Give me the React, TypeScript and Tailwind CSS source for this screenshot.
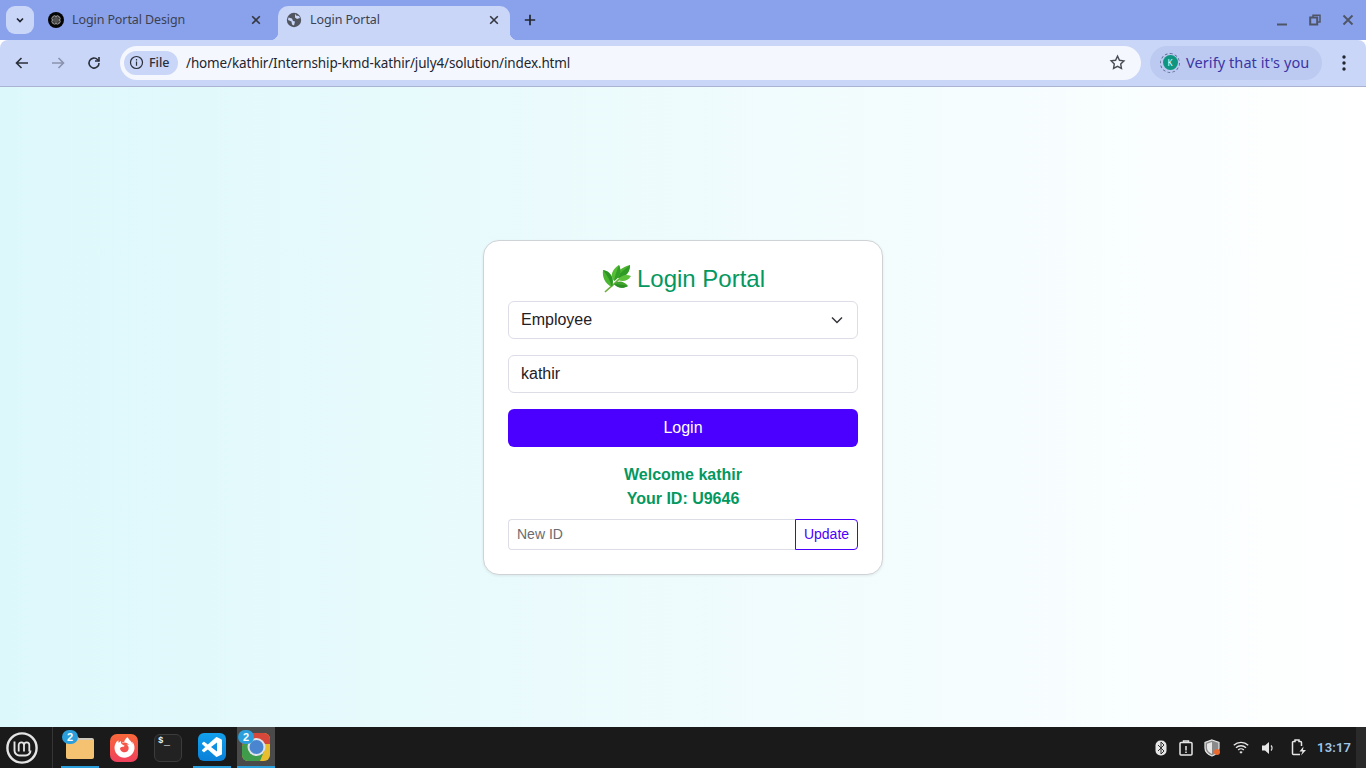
import React from "react";
import { FaFirefoxBrowser } from "react-icons/fa";

const ui = "font-['Noto_Sans',sans-serif]";

function Tab({ active, title, icon, w }: { active?: boolean; title: string; icon: React.ReactNode; w: string }) {
  return (
    <div className={`relative flex h-[34px] items-center rounded-t-[10px] pb-[6px] pr-[9px] ${w} ${active ? "bg-[#c9d6f8] pl-[8px]" : "pl-[9px]"}`}>
      <span className="flex w-[16px] justify-center">{icon}</span>
      <span className={`ml-[8px] flex-1 whitespace-nowrap text-[12.5px] tracking-[-0.1px] text-[#3c4150] ${ui}`}>{title}</span>
      <svg width="10" height="10" viewBox="0 0 10 10" className="mr-[2px]" fill="none" stroke="#34373f" strokeWidth="1.6">
        <path d="M1.2 1.2 8.8 8.8M8.8 1.2 1.2 8.8" />
      </svg>
      {active && (
        <>
          <span className="absolute bottom-0 left-[-8px] h-[8px] w-[8px] bg-[radial-gradient(circle_at_0_0,transparent_8px,#c9d6f8_8.5px)]" />
          <span className="absolute bottom-0 right-[-8px] h-[8px] w-[8px] bg-[radial-gradient(circle_at_100%_0,transparent_8px,#c9d6f8_8.5px)]" />
        </>
      )}
    </div>
  );
}

function TabStrip() {
  return (
    <div className="flex h-[40px] shrink-0 items-end bg-[#8aa1ec] pl-[6px]">
      <div className="mb-[6px] mr-[5px] flex h-[28px] w-[28px] items-center justify-center rounded-[9px] bg-[#c9d6f8]">
        <svg width="10" height="10" viewBox="0 0 10 10" fill="none" stroke="#1f2330" strokeWidth="1.7">
          <path d="M2 3.5 5 6.5 8 3.5" />
        </svg>
      </div>
      <Tab
        w="w-[233px]"
        title="Login Portal Design"
        icon={
          <svg width="16" height="16" viewBox="0 0 16 16">
            <circle cx="8" cy="8" r="8" fill="#050505" />
            <circle cx="8" cy="8" r="5" fill="#8f8f8f" />
            <g fill="none" stroke="#111111" strokeWidth="0.7">
              <ellipse cx="8" cy="8" rx="2.2" ry="4.6" />
              <ellipse cx="8" cy="8" rx="4.6" ry="2.2" />
              <circle cx="8" cy="8" r="1.2" />
            </g>
          </svg>
        }
      />
      <div className="w-[6px]" />
      <Tab
        active
        w="w-[232px]"
        title="Login Portal"
        icon={
          <svg width="16" height="16" viewBox="0 0 16 16">
            <circle cx="8" cy="8" r="7.2" fill="#50555f" />
            <path d="M2.5 5.5 6 6.5l1 2.500 2 .5-1 4-2-1-.5-3-3.500-1.500zM9 1.500l1 2 3 .5 1 2-3 1-2-1.500z" fill="#c9d6f8" />
          </svg>
        }
      />
      <div className="mb-[6px] ml-[10px] flex h-[28px] w-[20px] items-center justify-center">
        <svg width="12" height="12" viewBox="0 0 12 12" fill="none" stroke="#23262f" strokeWidth="1.7">
          <path d="M6 .8v10.400M.8 6h10.400" />
        </svg>
      </div>
      <div className="mb-[6px] ml-auto flex h-[28px] items-center gap-[21px] pr-[12px]">
        <svg width="12" height="12" viewBox="0 0 12 12" fill="none" stroke="#4e5566" strokeWidth="2">
          <path d="M1 10.500h10" />
        </svg>
        <svg width="12" height="12" viewBox="0 0 12 12" fill="none" stroke="#4e5566" strokeWidth="1.500">
          <path d="M4 3V1.200h7V8H8.500" />
          <rect x="1.200" y="3.500" width="7" height="7" strokeWidth="2" />
        </svg>
        <svg width="12" height="12" viewBox="0 0 12 12" fill="none" stroke="#4e5566" strokeWidth="1.900">
          <path d="M1.500 1.500 10.500 10.500M10.500 1.500 1.500 10.500" />
        </svg>
      </div>
    </div>
  );
}

function Toolbar() {
  return (
    <div className="flex h-[47px] shrink-0 items-center rounded-t-[8px] border-b border-[#aab4d2] bg-[#c9d6f8] pb-[1px]">
      <div className="flex w-[120px] items-center pl-[14px]">
        <svg width="16" height="16" viewBox="0 0 16 16" fill="none" stroke="#2b2f3a" strokeWidth="1.600">
          <path d="M14 8H2.500M7.500 3 2.500 8l5 5" />
        </svg>
        <svg width="16" height="16" viewBox="0 0 16 16" fill="none" stroke="#8a92ad" strokeWidth="1.600" className="ml-[20px]">
          <path d="M2 8h11.500M8.500 3l5 5-5 5" />
        </svg>
        <svg width="16" height="16" viewBox="0 0 16 16" fill="none" stroke="#2b2f3a" strokeWidth="1.600" className="ml-[20px]">
          <path d="M13 8a5 5 0 1 1-1.500-3.500L13 6" />
          <path d="M13 2v4H9" />
        </svg>
      </div>
      <div className="flex h-[34px] w-[1021px] items-center rounded-full bg-[#f5f7fe] pl-[4px] pr-[15px]">
        <div className="flex h-[24px] w-[54px] items-center rounded-full bg-[#c9d6f8] pl-[5px]">
          <svg width="15" height="15" viewBox="0 0 15 15" fill="none" stroke="#2b2f3a" strokeWidth="1.200">
            <circle cx="7.500" cy="7.500" r="6" />
            <path d="M7.500 6.500v4.200M7.500 4v1.500" />
          </svg>
          <span className={`ml-[5px] pt-[1px] text-[12.5px] font-medium text-[#2b2f3a] ${ui}`}>File</span>
        </div>
        <span className={`ml-[8px] flex-1 whitespace-nowrap pt-[1px] text-[13.5px] tracking-[-0.14px] text-[#23262f] ${ui}`}>
          /home/kathir/Internship-kmd-kathir/july4/solution/index.html
        </span>
        <svg width="17" height="17" viewBox="0 0 24 24" fill="none" stroke="#4a4d56" strokeWidth="2">
          <path d="m12 3 2.800 5.800 6.300.9-4.600 4.400 1.100 6.300-5.600-3-5.600 3 1.100-6.300L3 9.700l6.300-.9z" />
        </svg>
      </div>
      <div className="ml-[9px] flex h-[34px] w-[172px] items-center rounded-full bg-[#bccaf1] pl-[10px]">
        <div className="relative flex h-[20px] w-[20px] items-center justify-center rounded-full border border-dashed border-[#5f6b91]">
          <div className="flex h-[15px] w-[15px] items-center justify-center rounded-full bg-[#0f9580] text-[8px] text-white">K</div>
        </div>
        <span className={`ml-[6px] whitespace-nowrap text-[14.5px] tracking-[0.08px] text-[#3b35a5] ${ui}`}>Verify that it's you</span>
      </div>
      <svg width="4" height="16" viewBox="0 0 4 16" fill="#23262f" className="ml-[20px]">
        <circle cx="2" cy="2" r="1.700" />
        <circle cx="2" cy="8" r="1.700" />
        <circle cx="2" cy="14" r="1.700" />
      </svg>
    </div>
  );
}

function Leaf() {
  return (
    <svg width="30" height="28" viewBox="0 0 30 28" className="mr-[5px]">
      <path d="M3 27C8 22 16 17 24 6" stroke="#6fae3e" strokeWidth="1.500" fill="none" />
      <path d="M14 13C15 5 21 2 28 0 28 8 23 13 14 13z" fill="#4db52f" />
      <path d="M14 13C18 8 22 5 28 0 28 8 23 13 14 13z" fill="#2f9a26" />
      <path d="M12 16C7 10 11 4 17 0 20 6 18 12 12 16z" fill="#55bd34" />
      <path d="M12 16C13 10 15 5 17 0 20 6 18 12 12 16z" fill="#33a028" />
      <path d="M10 22C3 19 0 12 1 5 8 6 13 13 10 22z" fill="#49b530" />
      <path d="M10 22C8 15 5 10 1 5 8 6 13 13 10 22z" fill="#2c9525" />
      <path d="M16 15C19 10 24 9 29 11 26 16 21 17 16 15z" fill="#5cc13a" />
      <path d="M12 19C16 15 22 16 26 21 21 24 15 23 12 19z" fill="#3fa52b" />
      <path d="M12 19C17 19 21 20 26 21 21 24 15 23 12 19z" fill="#2c8f26" />
    </svg>
  );
}

function Card() {
  return (
    <div className="box-border flex w-[400px] flex-col rounded-[16px] border border-[#cfd3d6] bg-white px-[24px] pb-[24px] pt-[24px] font-['Liberation_Sans',sans-serif] shadow-[0_1px_3px_rgba(0,0,0,0.08)]">
      <div className="flex h-[28px] items-center justify-center pl-[1px] text-[24px] leading-[28px] text-[#03985f]">
        <Leaf />
        <span>Login Portal</span>
      </div>
      <div className="mt-[8px] flex h-[38px] items-center justify-between rounded-[6px] border border-[#dcdde6] pl-[12px] pr-[14px] text-[16px] text-[#1f2024]">
        <span>Employee</span>
        <svg width="12" height="8" viewBox="0 0 12 8" fill="none" stroke="#33353c" strokeWidth="1.500">
          <path d="M1 1.500 6 6.500 11 1.500" />
        </svg>
      </div>
      <div className="mt-[16px] flex h-[38px] items-center rounded-[6px] border border-[#dcdde6] pl-[12px] text-[16px] text-[#1f2024]">kathir</div>
      <div className="mt-[16px] flex h-[38px] items-center justify-center rounded-[6px] bg-[#4b00ff] text-[16px] text-white">Login</div>
      <div className="mt-[16px] text-center text-[16px] font-bold leading-[24px] text-[#03985f]">
        <div>Welcome kathir</div>
        <div>Your ID: U9646</div>
      </div>
      <div className="mt-[8px] flex h-[31px]">
        <div className="flex flex-1 items-center rounded-l-[4px] border border-r-0 border-[#dcdde6] pl-[8px] text-[14px] text-[#6b6b70]">New ID</div>
        <div className="flex w-[63px] items-center justify-center rounded-r-[4px] border border-[#4b00ff] text-[14px] text-[#4b00ff]">Update</div>
      </div>
    </div>
  );
}

function Badge() {
  return (
    <span className="absolute left-[1px] top-[3px] z-10 flex h-[14px] w-[16px] items-center justify-center rounded-full bg-[#2a9fdc] font-['Liberation_Sans',sans-serif] text-[11px] font-bold text-white">
      2
    </span>
  );
}

function Taskbar() {
  return (
    <div className="flex h-[41px] shrink-0 items-center bg-[#1a1a1a]">
      <div className="flex w-[53px] items-center justify-between">
        <svg width="32" height="32" viewBox="0 0 32 32" className="ml-[6px]" fill="none" stroke="#e4e4e4">
          <circle cx="16" cy="16" r="14.600" strokeWidth="2.400" />
          <path d="M8.500 9.500V18.500a5 5 0 0 0 5 5h6a5 5 0 0 0 5-5" strokeWidth="1.900" />
          <path d="M12.700 19.500V13a2.200 2.200 0 0 1 5.300 0v6.500M18 13a2.200 2.200 0 0 1 5.300 0v6.500" strokeWidth="1.800" />
        </svg>
        <div className="h-[41px] w-px bg-[#353535]" />
      </div>
      <div className="relative ml-[8px] flex h-[41px] w-[38px] items-center justify-center border-b-[2px] border-[#2a9fdc]">
        <Badge />
        <svg width="28" height="23" viewBox="0 0 28 23" className="mt-[2px]">
          <path d="M0 2a2 2 0 0 1 2-2h9l2 2h13a2 2 0 0 1 2 2v2H0z" fill="#cfc9bb" />
          <path d="M0 4h28v17a2 2 0 0 1-2 2H2a2 2 0 0 1-2-2z" fill="#f5c272" />
        </svg>
      </div>
      <div className="ml-[6px] flex h-[41px] w-[38px] items-center justify-center">
        <div className="flex h-[28px] w-[28px] items-center justify-center rounded-[7px] bg-[linear-gradient(to_bottom,#f8683a,#f0405c)]">
          <FaFirefoxBrowser size={21} color="#ffffff" />
        </div>
      </div>
      <div className="ml-[6px] flex h-[41px] w-[38px] items-center justify-center">
        <div className="relative h-[28px] w-[28px] rounded-[6px] border border-[#3c3c3c] bg-[#222222]">
          <span className="absolute left-[3px] top-[1px] font-['Liberation_Mono',monospace] text-[9px] font-bold leading-[11px] tracking-[0.5px] text-[#eeeeee]">$</span>
          <span className="absolute left-[9px] top-[2px] font-['Liberation_Mono',monospace] text-[10px] font-bold leading-[11px] text-[#eeeeee]">_</span>
        </div>
      </div>
      <div className="ml-[6px] flex h-[41px] w-[38px] items-center justify-center border-b-[2px] border-[#2a9fdc]">
        <div className="flex h-[28px] w-[28px] items-center justify-center rounded-[6px] bg-[linear-gradient(to_bottom,#12a0ec,#0a80d8)]">
          <svg width="20" height="20" viewBox="0 0 24 24">
            <path
              fill="#ffffff"
              d="M23.150 2.587L18.210.21a1.494 1.494 0 0 0-1.705.29l-9.460 8.630-4.120-3.128a.999.999 0 0 0-1.276.057L.327 7.261A1 1 0 0 0 .326 8.740L3.899 12 .326 15.260a1 1 0 0 0 .001 1.479L1.650 17.940a.999.999 0 0 0 1.276.057l4.120-3.128 9.460 8.630a1.492 1.492 0 0 0 1.704.29l4.942-2.377A1.500 1.500 0 0 0 24 20.060V3.939a1.500 1.500 0 0 0-.850-1.352zm-5.146 14.861L10.826 12l7.178-5.448v10.896z"
            />
          </svg>
        </div>
      </div>
      <div className="relative ml-[6px] flex h-[41px] w-[38px] items-center justify-center border-b-[2px] border-[#2a9fdc] bg-[#4a4a4a]">
        <Badge />
        <div className="h-[28px] w-[28px] overflow-hidden rounded-[6px] bg-[#e8bd2e]">
          <svg width="28" height="28" viewBox="0 0 28 28">
            <path d="M0 0h28v11H14L5 21 0 12z" fill="#d8483a" />
            <path d="M0 11l10 17h8L23 16H14L5 11z" fill="#3f9c4a" />
            <path d="M0 12v16h14z" fill="#3f9c4a" />
            <circle cx="14.500" cy="14" r="9" fill="#dfe3ea" />
            <circle cx="14.500" cy="14" r="7" fill="#4a86cf" />
          </svg>
        </div>
      </div>

      <div className="ml-auto flex h-[41px] items-center">
        <svg width="12" height="16" viewBox="0 0 12 16">
          <rect x="0.500" y="0.500" width="11" height="15" rx="5" fill="#e6e6e6" />
          <path d="M3 5l6 6-3 3V2l3 3-6 6" fill="none" stroke="#333333" strokeWidth="1" />
        </svg>
        <svg width="14" height="16" viewBox="0 0 14 16" className="ml-[12px]" fill="none" stroke="#e6e6e6" strokeWidth="1.500">
          <rect x="1" y="2.500" width="12" height="12.500" rx="1" />
          <path d="M4.500 2.500V1h5v1.500M7 6v4.500M7 11.500v1.500" />
        </svg>
        <svg width="18" height="18" viewBox="0 0 18 18" className="ml-[11px]">
          <path d="M8 1 15 3.500V9c0 4-3 6.500-7 8-4-1.500-7-4-7-8V3.500z" fill="#8a8a8a" stroke="#e6e6e6" strokeWidth="1.200" />
          <path d="M8 3v12c-3-1.500-5-3.500-5-6V4.800z" fill="#e6e6e6" />
          <circle cx="13" cy="13" r="3" fill="#ee6a2c" />
        </svg>
        <svg width="16" height="13" viewBox="0 0 16 13" className="ml-[11px]" fill="none" stroke="#e6e6e6" strokeWidth="1.400">
          <path d="M.8 4.200a10.500 10.500 0 0 1 14.400 0M3 6.700a7.300 7.300 0 0 1 10 0M5.200 9a4 4 0 0 1 5.600 0" />
          <path d="M8 12.800 6.400 11a2.300 2.300 0 0 1 3.200 0z" fill="#e6e6e6" stroke="none" />
        </svg>
        <svg width="14" height="14" viewBox="0 0 14 14" className="ml-[12px]" fill="#e6e6e6">
          <path d="M1 4.500h3L8 1v12L4 9.500H1z" />
          <path d="M10 4.500a3.500 3.500 0 0 1 0 5" fill="none" stroke="#e6e6e6" strokeWidth="1.200" />
        </svg>
        <svg width="16" height="17" viewBox="0 0 16 17" className="ml-[16px]">
          <path d="M9 15.500H2.500a1 1 0 0 1-1-1V3.500a1 1 0 0 1 1-1h1.500V1h4v1.500h1.500a1 1 0 0 1 1 1V7" fill="none" stroke="#e6e6e6" strokeWidth="1.500" />
          <path d="M12.500 7.500 8.500 12.500h3L10 16.500l5-5.500h-3z" fill="#e6e6e6" />
        </svg>
        <span className="ml-[10px] w-[39px] font-['Roboto',sans-serif] text-[13px] font-semibold tracking-[0.2px] text-[#9fc5e8]">13:17</span>
        <div className="h-[41px] w-[10px] bg-[#2a2a2a]" />
      </div>
    </div>
  );
}

export default function App() {
  return (
    <div className="flex h-screen w-screen flex-col overflow-hidden">
      <TabStrip />
      <Toolbar />
      <main className="flex flex-1 items-center justify-center bg-[linear-gradient(to_right,#ddf8fb,#ffffff)]">
        <Card />
      </main>
      <Taskbar />
    </div>
  );
}
